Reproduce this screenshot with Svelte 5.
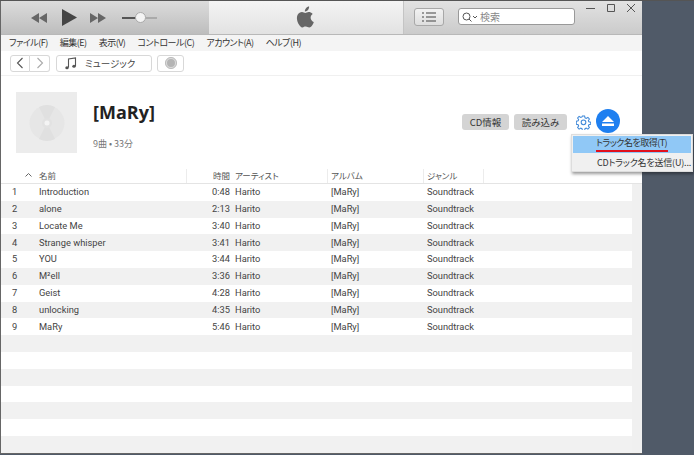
<script>
  const menus = ['ファイル(F)', '編集(E)', '表示(V)', 'コントロール(C)', 'アカウント(A)', 'ヘルプ(H)'];
  const tracks = [
    ['Introduction', '0:48'],
    ['alone', '2:13'],
    ['Locate Me', '3:40'],
    ['Strange whisper', '3:41'],
    ['YOU', '3:44'],
    ['M²ell', '3:36'],
    ['Geist', '4:28'],
    ['unlocking', '4:35'],
    ['MaRy', '5:46']
  ];
  const blanks = [0, 1, 2, 3, 4, 5, 6];
</script>

<div class="screen">
  <div class="window">
    <div class="titlebar">
      <div class="player">
        <svg class="rew" viewBox="0 0 16 10" width="16" height="10"><path d="M8 0v10L0 5zM16 0v10L8 5z" /></svg>
        <svg class="play" viewBox="0 0 15 17" width="15" height="17"><path d="M0 0l15 8.500L0 17z" /></svg>
        <svg class="ffw" viewBox="0 0 16 10" width="16" height="10"><path d="M0 0v10l8-5zM8 0v10l8-5z" /></svg>
        <div class="volume"><span class="knob"></span></div>
      </div>
      <div class="lcd">
        <svg viewBox="0 0 20 24" width="20" height="24"><path d="M14.600 12.700c0-2.400 2-3.600 2.100-3.700-1.200-1.700-3-1.900-3.600-2-1.500-.2-3 .9-3.800.9-.8 0-2-.9-3.300-.9-1.700 0-3.300 1-4.200 2.500-1.800 3.100-.5 7.700 1.300 10.300.9 1.300 1.900 2.700 3.300 2.600 1.300-.1 1.800-.8 3.400-.8 1.600 0 2 .8 3.400.8 1.400 0 2.300-1.300 3.200-2.500 1-1.500 1.400-2.900 1.400-3-.1 0-3.200-1.200-3.200-4.700zM12 5c.7-.9 1.200-2.100 1.100-3.400-1.100 0-2.400.7-3.100 1.600-.7.800-1.300 2-1.100 3.200 1.200.1 2.400-.6 3.100-1.400z" /></svg>
      </div>
      <div class="tools">
        <button class="listbtn" aria-label="リスト">
          <svg viewBox="0 0 14 10" width="14" height="10"><path d="M0 1h2M0 5h2M0 9h2M4 1h10M4 5h10M4 9h10" /></svg>
        </button>
        <div class="search">
          <svg viewBox="0 0 16 10" width="16" height="10"><circle cx="4.500" cy="4.500" r="3.500" /><path d="M7 7l2.500 2.500M11 4l2 2 2-2" /></svg>
          <span>検索</span>
        </div>
        <div class="winctl">
          <svg viewBox="0 0 10 10" width="10" height="10"><path d="M0 5.500h9" /></svg>
          <svg viewBox="0 0 10 10" width="10" height="10"><path d="M1.500 1.500h7v7h-7z" /></svg>
          <svg viewBox="0 0 10 10" width="10" height="10"><path d="M1 1l8 8M9 1l-8 8" /></svg>
        </div>
      </div>
    </div>

    <div class="menubar">
      {#each menus as m}<span>{m}</span>{/each}
    </div>

    <div class="navbar">
      <div class="arrows">
        <button aria-label="戻る"><svg viewBox="0 0 8 12" width="8" height="12"><path d="M6.500 1L1.500 6l5 5" /></svg></button>
        <button class="off" aria-label="進む"><svg viewBox="0 0 8 12" width="8" height="12"><path d="M1.500 1l5 5-5 5" /></svg></button>
      </div>
      <button class="source">
        <svg viewBox="0 0 12 13" width="12" height="13"><path class="stem" d="M3.500 10.500V2l7-1v8.300" /><ellipse cx="2" cy="10.700" rx="1.700" ry="1.500" /><ellipse cx="9" cy="9.300" rx="1.700" ry="1.500" /></svg>
        <span>ミュージック</span>
      </button>
      <button class="disc" aria-label="CD"><span></span></button>
    </div>

    <div class="content">
      <div class="album">
        <div class="art">
          <svg viewBox="0 0 36 36" width="36" height="36"><circle cx="18" cy="18" r="17.500" fill="#e6e6e6" /><path d="M18 18L10 2a18 18 0 0 1 16 0zM18 18l8 16a18 18 0 0 1-16 0z" fill="#e0e0e0" /><circle cx="18" cy="18" r="5" fill="#e2e2e2" /><circle cx="18" cy="18" r="2.500" fill="#f4f4f4" /></svg>
        </div>
        <div class="info">
          <h1>[MaRy]</h1>
          <p>9曲 • 33分</p>
        </div>
        <div class="actions">
          <button class="pill cd">CD情報</button>
          <button class="pill read">読み込み</button>
          <svg class="gear" viewBox="0 0 16 16" width="15" height="15"><path d="M6.800 1h2.400l.4 2 1.300.6 1.800-1.100 1.600 1.700-1.100 1.700.5 1.300 2 .4v2.400l-2 .4-.5 1.300 1.100 1.700-1.600 1.700-1.800-1.100-1.300.6-.4 2H6.800l-.4-2-1.300-.6-1.800 1.100-1.600-1.700 1.100-1.700-.5-1.300-2-.4V6.600l2-.4.5-1.300-1.100-1.700 1.600-1.700 1.800 1.100 1.300-.6z" /><circle cx="8" cy="7.800" r="2.500" /></svg>
          <button class="eject" aria-label="取り出し">
            <svg viewBox="0 0 12 10" width="12" height="10"><path d="M6 0l6 6H0zM0 7.500h12V10H0z" /></svg>
          </button>
        </div>
      </div>

      <div class="table">
        <div class="row head">
          <span class="num"><svg viewBox="0 0 7 4" width="7" height="4"><path d="M.5 3.500l3-3 3 3" /></svg></span>
          <span class="name">名前</span>
          <span class="time">時間</span>
          <span class="artist">アーティスト</span>
          <span class="albumcol">アルバム</span>
          <span class="genre">ジャンル</span>
        </div>
        <div class="body">
          <div class="rows">
            {#each tracks as t, i}
              <div class="row" class:alt={i % 2 === 1}>
                <span class="num">{i + 1}</span>
                <span class="name">{t[0]}</span>
                <span class="time">{t[1]}</span>
                <span class="artist">Harito</span>
                <span class="albumcol">[MaRy]</span>
                <span class="genre">Soundtrack</span>
              </div>
            {/each}
            {#each blanks as b}
              <div class="row" class:alt={b % 2 === 0}></div>
            {/each}
          </div>
          <div class="scrollbar"></div>
        </div>
      </div>
    </div>
  </div>

  <div class="popup">
    <div class="item sel"><span class="mark">トラック名を取得(T)</span></div>
    <div class="item second">CDトラック名を送信(U)...</div>
  </div>
</div>

<style>
  :global(body) {
    margin: 0;
    background: #505a68;
  }
  .screen {
    position: relative;
    width: 694px;
    height: 455px;
    overflow: hidden;
    font-family: "Noto Sans CJK JP", "Open Sans", sans-serif;
    font-feature-settings: "palt";
    color: #333;
    background: #505a68;
    border-top: 1px solid #555;
    box-sizing: border-box;
  }
  .window {
    width: 642px;
    height: 453px;
    box-sizing: border-box;
    background: #fff;
    border-left: 1px solid #666;
    border-bottom: 1px solid #666;
    display: flex;
    flex-direction: column;
  }
  button {
    font-family: inherit;
    font-feature-settings: inherit;
    padding: 0;
    cursor: default;
  }

  .titlebar {
    display: flex;
    height: 33px;
    flex: none;
    border-bottom: 1px solid #b8b8b8;
    box-sizing: content-box;
  }
  .player {
    width: 208px;
    display: flex;
    align-items: center;
    background: linear-gradient(#dcdcdc, #bdbdbd);
  }
  .rew { margin-left: 30px; fill: #666; }
  .play { margin-left: 15px; fill: #444; }
  .ffw { margin-left: 13px; fill: #666; }
  .volume {
    position: relative;
    width: 35px;
    height: 2px;
    margin-left: 16px;
    background: linear-gradient(to right, #555 50%, #aaa 50%);
  }
  .knob {
    position: absolute;
    left: 13px;
    top: -5px;
    width: 11px;
    height: 11px;
    border-radius: 50%;
    background: #f4f4f4;
    border: 1px solid #aaa;
    box-sizing: border-box;
  }
  .lcd {
    width: 195px;
    display: flex;
    align-items: center;
    justify-content: center;
    background: linear-gradient(#f4f4f4, #e2e2e2);
    border-right: 1px solid #c4c4c4;
    box-sizing: border-box;
  }
  .lcd svg { fill: #666; margin-bottom: 1px; }
  .tools {
    flex: 1;
    display: flex;
    align-items: flex-start;
    padding-top: 7px;
    background: linear-gradient(#e2e2e2, #cbcbcb);
    position: relative;
  }
  .listbtn {
    width: 30px;
    height: 18px;
    margin-left: 10px;
    border: 1px solid #a8a8a8;
    border-radius: 3px;
    background: linear-gradient(#f2f2f2, #dedede);
    display: flex;
    align-items: center;
    justify-content: center;
  }
  .listbtn svg { fill: none; stroke: #444; stroke-width: 1.200; }
  .search {
    width: 117px;
    height: 17px;
    margin-left: 14px;
    box-sizing: border-box;
    border: 1px solid #999;
    border-radius: 3px;
    background: #fff;
    display: flex;
    align-items: center;
    gap: 2px;
    padding-left: 3px;
    font-size: 10px;
    color: #888;
  }
  .search svg { fill: none; stroke: #555; stroke-width: 1; }
  .winctl {
    display: flex;
    gap: 10px;
    margin-left: 11px;
    margin-top: -5px;
  }
  .winctl svg { fill: none; stroke: #555; stroke-width: 1; }

  .menubar {
    height: 15px;
    padding-bottom: 1px;
    flex: none;
    display: flex;
    align-items: center;
    gap: 12px;
    padding-left: 8px;
    background: #f4f4f4;
    font-size: 9px;
    letter-spacing: -0.5px;
    color: #333;
  }

  .navbar {
    height: 24px;
    flex: none;
    display: flex;
    align-items: center;
    padding-left: 9px;
    background: #fff;
    border-bottom: 1px solid #f0f0f0;
    box-sizing: content-box;
  }
  .arrows { display: flex; }
  .arrows button {
    width: 20px;
    height: 17px;
    border: 1px solid #d8d8d8;
    background: #fff;
    display: flex;
    align-items: center;
    justify-content: center;
  }
  .arrows button:first-child { border-radius: 3px 0 0 3px; }
  .arrows button:last-child { border-radius: 0 3px 3px 0; border-left: none; }
  .arrows svg { fill: none; stroke: #555; stroke-width: 1.100; }
  .arrows .off svg { stroke: #aaa; }
  .source {
    width: 96px;
    height: 17px;
    margin-left: 6px;
    border: 1px solid #d8d8d8;
    border-radius: 3px;
    background: #fff;
    display: flex;
    align-items: center;
    gap: 8px;
    padding-left: 8px;
    font-size: 9.500px;
    color: #444;
  }
  .source svg { fill: #555; }
  .source .stem { fill: none; stroke: #555; stroke-width: 1.100; }
  .disc {
    width: 27px;
    height: 17px;
    margin-left: 5px;
    border: 1px solid #d8d8d8;
    border-radius: 3px;
    background: #fff;
    display: flex;
    align-items: center;
    justify-content: center;
  }
  .disc span {
    width: 12px;
    height: 12px;
    box-sizing: border-box;
    border-radius: 50%;
    background: #b4b4b4;
    border: 2px solid #ddd;
    outline: 1px solid #bbb;
    outline-offset: -1px;
  }

  .content {
    flex: 1;
    min-height: 0;
    display: flex;
    flex-direction: column;
    overflow: hidden;
  }
  .album {
    height: 93px;
    flex: none;
    display: flex;
    padding: 16px 22px 0 15px;
    box-sizing: border-box;
  }
  .art {
    width: 61px;
    height: 61px;
    background: #ececec;
    display: flex;
    align-items: center;
    justify-content: center;
  }
  .info { margin-left: 16px; }
  h1 {
    margin: 7px 0 0;
    font-family: "Open Sans", sans-serif;
    font-size: 18px;
    line-height: 26px;
    font-weight: 700;
    color: #222;
  }
  p {
    margin: 12px 0 0;
    font-size: 9px;
    line-height: 14px;
    color: #777;
  }
  .actions {
    margin-left: auto;
    display: flex;
    align-items: flex-start;
    padding-top: 17px;
  }
  .pill {
    height: 16px;
    border: none;
    border-radius: 3px;
    background: #d4d4d4;
    color: #333;
    font-size: 9.500px;
    line-height: 16px;
    margin-top: 5px;
    white-space: nowrap;
    text-align: center;
  }
  .cd { width: 47px; }
  .read { width: 53px; margin-left: 5px; }
  .gear {
    fill: none;
    stroke: #3d87d8;
    stroke-width: 1.100;
    margin: 6px 0 0 9px;
  }
  .eject {
    width: 24px;
    height: 24px;
    margin-left: 5px;
    border: none;
    border-radius: 50%;
    background: #1e7ff0;
    display: flex;
    align-items: center;
    justify-content: center;
  }
  .eject svg { fill: #fff; }

  .table {
    flex: 1;
    min-height: 0;
    display: flex;
    flex-direction: column;
    font-family: "Roboto", "Noto Sans CJK JP", sans-serif;
    font-size: 9.300px;
    color: #444;
  }
  .body {
    flex: 1;
    min-height: 0;
    display: flex;
    overflow: hidden;
  }
  .rows { flex: 1; }
  .scrollbar {
    width: 10px;
    flex: none;
    background: #f0f0f0;
  }
  .row {
    height: 16.800px;
    display: grid;
    grid-template-columns: 35px 151px 45px 96px 96px 60px;
    align-items: center;
    box-sizing: border-box;
    line-height: 1;
    padding-bottom: 1px;
    white-space: nowrap;
  }
  .row.alt { background: #f1f1f1; }
  .head {
    height: 15px;
    flex: none;
    padding-bottom: 0;
    border-bottom: 1px solid #e4e4e4;
    font-family: "Noto Sans CJK JP", sans-serif;
    font-size: 8.500px;
    color: #555;
  }
  .head span { height: 14px; line-height: 13px; box-sizing: border-box; }
  .head .name, .head .artist, .head .albumcol, .head .genre {
    border-right: 1px solid #ececec;
  }
  .head .num { text-align: right; padding-right: 4px; }
  .head svg { fill: none; stroke: #666; stroke-width: 1; vertical-align: 2px; }
  .num { padding-left: 11px; }
  .name { padding-left: 3px; }
  .time { text-align: right; padding-right: 2px; }
  .artist { padding-left: 3px; }
  .albumcol { padding-left: 3px; }
  .genre { padding-left: 3px; }

  .popup {
    position: absolute;
    left: 571px;
    top: 133px;
    width: 122px;
    height: 38px;
    box-sizing: border-box;
    padding: 1px;
    background: #f0f0f0;
    border: 1px solid #ddd;
    box-shadow: 1px 2px 3px rgba(0, 0, 0, 0.4);
    font-size: 9px;
    color: #333;
  }
  .item {
    height: 17px;
    line-height: 17px;
    padding-left: 24px;
    white-space: nowrap;
  }
  .second { margin-top: 1px; letter-spacing: -0.2px; }
  .item.sel { background: #90c8f6; }
  .mark {
    display: block;
    width: 72px;
    height: 14px;
    line-height: 14px;
    letter-spacing: -0.5px;
    border-bottom: 2px solid #e0101c;
    box-sizing: content-box;
    margin-left: -1px;
  }
</style>
